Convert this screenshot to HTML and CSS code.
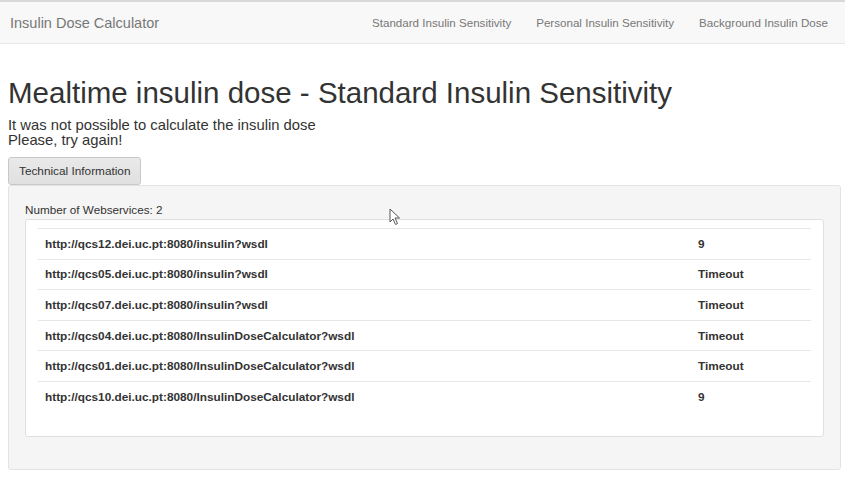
FILE: index.html
```html
<!DOCTYPE html>
<html>
<head>
<meta charset="utf-8">
<link rel="stylesheet" href="styles.css">
</head>
<body>
<nav class="navbar">
  <a class="brand">Insulin Dose Calculator</a>
  <ul class="nav-links">
    <li>Standard Insulin Sensitivity</li>
    <li>Personal Insulin Sensitivity</li>
    <li>Background Insulin Dose</li>
  </ul>
</nav>
<main class="content">
  <h1 class="title">Mealtime insulin dose - Standard Insulin Sensitivity</h1>
  <p class="msg">It was not possible to calculate the insulin dose<br>Please, try again!</p>
  <button class="btn">Technical Information</button>
  <div class="well">
    <div class="count">Number of Webservices: 2</div>
    <div class="panel">
      <table class="ws">
        <tr><td>http://qcs12.dei.uc.pt:8080/insulin?wsdl</td><td class="res">9</td></tr>
        <tr><td>http://qcs05.dei.uc.pt:8080/insulin?wsdl</td><td class="res">Timeout</td></tr>
        <tr><td>http://qcs07.dei.uc.pt:8080/insulin?wsdl</td><td class="res">Timeout</td></tr>
        <tr><td>http://qcs04.dei.uc.pt:8080/InsulinDoseCalculator?wsdl</td><td class="res">Timeout</td></tr>
        <tr><td>http://qcs01.dei.uc.pt:8080/InsulinDoseCalculator?wsdl</td><td class="res">Timeout</td></tr>
        <tr><td>http://qcs10.dei.uc.pt:8080/InsulinDoseCalculator?wsdl</td><td class="res">9</td></tr>
      </table>
    </div>
  </div>
</main>
<svg class="cursor" width="12" height="18" viewBox="0 0 12 18"><path d="M1 1 L1 14 L4 11 L6.5 16.5 L8.5 15.5 L6 10 L10.5 10 Z" fill="#fff" stroke="#555" stroke-width="1"/></svg>
</body>
</html>
```
FILE: styles.css
```css
html, body {
  margin: 0;
  padding: 0;
  background: #fff;
  font-family: "Liberation Sans", Arial, sans-serif;
  color: #333;
}
.navbar {
  height: 41px;
  border-top: 2px solid #d9d9d9;
  border-bottom: 1px solid #e7e7e7;
  background: #f8f8f8;
  display: flex;
  align-items: center;
  justify-content: space-between;
  padding: 0 0 0 10px;
}
.brand {
  font-size: 14.5px;
  color: #777;
}
.nav-links {
  list-style: none;
  display: flex;
  margin: 0;
  padding: 0 17px 0 0;
  gap: 25px;
}
.nav-links li {
  font-size: 11.6px;
  color: #777;
}
.content {
  padding: 0 4px 0 8px;
}
.title {
  font-weight: normal;
  font-size: 29.5px;
  margin: 31px 0 0 0;
  line-height: 36px;
  color: #333;
}
.msg {
  font-size: 14.8px;
  line-height: 15px;
  margin: 7px 0 9px 0;
}
.btn {
  display: block;
  font-family: "Liberation Sans", Arial, sans-serif;
  font-size: 11.8px;
  color: #333;
  height: 28px;
  padding: 0 10px;
  border: 1px solid #c8c8c8;
  border-radius: 3px;
  background: linear-gradient(#e9e9e9, #e0e0e0);
}
.well {
  background: #f5f5f5;
  border: 1px solid #e3e3e3;
  border-radius: 3px;
  padding: 17px 16px 32px 16px;
}
.count {
  font-size: 11.7px;
  line-height: 14px;
  margin: 0 0 2px 0;
}
.panel {
  background: #fff;
  border: 1px solid #e0e0e0;
  border-radius: 3px;
  padding: 8px 12px 24px 12px;
}
.ws {
  width: 100%;
  border-collapse: collapse;
}
.ws td {
  border-top: 1px solid #e6e6e6;
  font-size: 11.8px;
  font-weight: bold;
  height: 29.6px;
  padding: 0 0 0 7px;
  color: #333;
}
.ws td.res {
  width: 113px;
}
.cursor {
  position: absolute;
  left: 389px;
  top: 208px;
}
```
